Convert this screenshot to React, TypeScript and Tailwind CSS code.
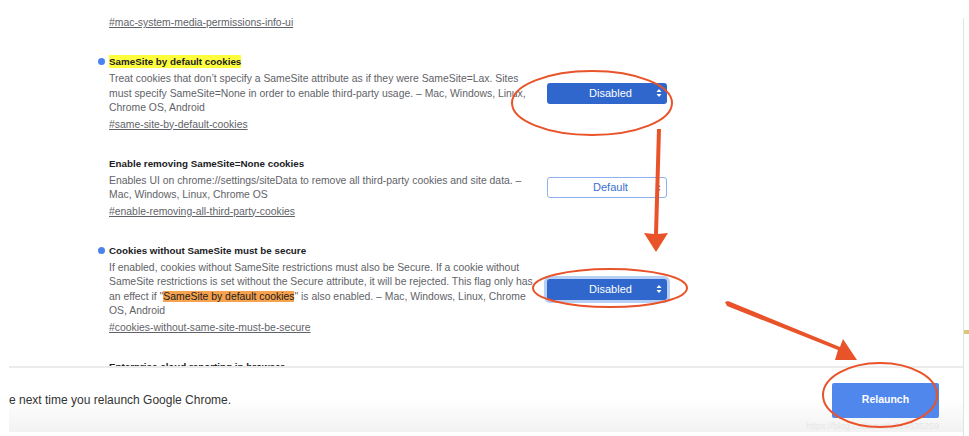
import React from 'react';

type Flag = {
  title: string;
  lines: React.ReactNode[];
  link: string;
  dot?: boolean;
  highlight?: boolean;
  value: string;
  active?: boolean;
  focused?: boolean;
};

const flags: Flag[] = [
  {
    title: 'SameSite by default cookies',
    dot: true,
    highlight: true,
    lines: [
      'Treat cookies that don\u2019t specify a SameSite attribute as if they were SameSite=Lax. Sites',
      'must specify SameSite=None in order to enable third-party usage. \u2013 Mac, Windows, Linux,',
      'Chrome OS, Android',
    ],
    link: '#same-site-by-default-cookies',
    value: 'Disabled',
    active: true,
  },
  {
    title: 'Enable removing SameSite=None cookies',
    lines: [
      'Enables UI on chrome://settings/siteData to remove all third-party cookies and site data. \u2013',
      'Mac, Windows, Linux, Chrome OS',
    ],
    link: '#enable-removing-all-third-party-cookies',
    value: 'Default',
  },
  {
    title: 'Cookies without SameSite must be secure',
    dot: true,
    lines: [
      'If enabled, cookies without SameSite restrictions must also be Secure. If a cookie without',
      'SameSite restrictions is set without the Secure attribute, it will be rejected. This flag only has',
      <>
        an effect if &quot;<span className="bg-[#f7a24e] text-[#202124]">SameSite by default cookies</span>&quot; is also enabled. &ndash; Mac, Windows, Linux, Chrome
      </>,
      'OS, Android',
    ],
    link: '#cookies-without-same-site-must-be-secure',
    value: 'Disabled',
    active: true,
    focused: true,
  },
];

function Arrows({ light }: { light?: boolean }) {
  const c = light ? '#3b73d6' : '#ffffff';
  return (
    <svg width="6" height="10" viewBox="0 0 6 10" className="shrink-0">
      <path d="M3 1 L5.5 4 H0.5 Z" fill={c} />
      <path d="M3 9 L5.5 6 H0.5 Z" fill={c} />
    </svg>
  );
}

function FlagSelect({ flag }: { flag: Flag }) {
  if (flag.active) {
    return (
      <div
        className={`w-[120px] h-[21px] rounded-[3px] bg-[#2f67cd] flex items-center pl-[18px] pr-[5px] text-white text-[11px] ${
          flag.focused ? 'ring-[3px] ring-[#b8cff5]' : ''
        }`}
      >
        <span className="flex-1 text-center">{flag.value}</span>
        <Arrows />
      </div>
    );
  }
  return (
    <div className="w-[120px] h-[21px] rounded-[3px] bg-white border border-[#8fb0ee] flex items-center pl-[18px] pr-[5px] text-[#3b6fd0] text-[11px]">
      <span className="flex-1 text-center">{flag.value}</span>
      <Arrows light />
    </div>
  );
}

function FlagRow({ flag }: { flag: Flag }) {
  return (
    <div className="flex items-center mb-[25px]">
      <div className="w-[438px] shrink-0">
        <div className="relative leading-[14px] h-[14px] mb-[3px] text-[9.8px] font-bold text-[#202124]">
          {flag.dot && (
            <span className="absolute left-[-11px] top-[3px] w-[7px] h-[7px] rounded-full bg-[#4a83ee]" />
          )}
          <span className={flag.highlight ? 'bg-[#ffff3d] py-[1px]' : ''}>{flag.title}</span>
        </div>
        {flag.lines.map((l, i) => (
          <div key={i} className="whitespace-nowrap text-[10.4px] leading-[14.5px] text-[#5f6368]">
            {l}
          </div>
        ))}
        <div className="mt-[2px] text-[10.4px] leading-[14px] text-[#5f6368] underline">{flag.link}</div>
      </div>
      <FlagSelect flag={flag} />
    </div>
  );
}

function Annotations() {
  const red = '#e9532a';
  return (
    <svg className="absolute inset-0 pointer-events-none" width="969" height="436" viewBox="0 0 969 436">
      <ellipse cx="592" cy="103" rx="80" ry="32" fill="none" stroke={red} strokeWidth="2" />
      <ellipse cx="610" cy="288" rx="77" ry="19" fill="none" stroke={red} strokeWidth="2" />
      <ellipse cx="880" cy="395" rx="57" ry="32" fill="none" stroke={red} strokeWidth="2" />
      <path d="M657 129 L661 129 L658 234 L668 233 L656 252 L644 233 L654 234 Z" fill={red} />
      <path d="M725 302 L727 306 L838 350 L835 360 L857 360 L843 339 L840 347 L728 301 Z" fill={red} />
    </svg>
  );
}

export default function App() {
  return (
    <div
      className="relative w-[969px] h-[436px] bg-white overflow-hidden"
      style={{ fontFamily: '"Liberation Sans", Arial, sans-serif' }}
    >
      <div className="flex h-full">
        <div className="w-[963px] shrink-0 flex flex-col">
          <div className="h-[366px] overflow-hidden pl-[109px] pt-[16px]">
            <div className="text-[10.4px] leading-[14px] text-[#5f6368] underline mb-[25px]">
              #mac-system-media-permissions-info-ui
            </div>
            {flags.map((f) => (
              <FlagRow key={f.link} flag={f} />
            ))}
            <div className="text-[9.8px] leading-[14px] font-bold text-[#202124]">Enterprise cloud reporting in browser</div>
          </div>
          <div className="ml-[9px] h-[66px] border-t-2 border-[#ebebeb] bg-gradient-to-b from-white from-50% to-[#f2f2f2] flex items-center justify-between pr-[24px]">
            <span className="text-[12px] text-[#333333]">e next time you relaunch Google Chrome.</span>
            <div className="relative">
              <button className="w-[107px] h-[35px] rounded-[2px] bg-[#4f87ec] text-white text-[10.5px] font-bold">
                Relaunch
              </button>
              <span className="absolute left-[-26px] top-[37px] whitespace-nowrap text-[9px] text-[#e6e6e6]">
                https://blog.csdn.net/u014635259
              </span>
            </div>
          </div>
        </div>
        <div className="flex-1 mt-[18px] border-l border-[#e3e3e3] relative">
          <span className="absolute left-0 top-[312px] w-[6px] h-[4px] bg-[#d9c87a]" />
        </div>
      </div>
      <Annotations />
    </div>
  );
}
